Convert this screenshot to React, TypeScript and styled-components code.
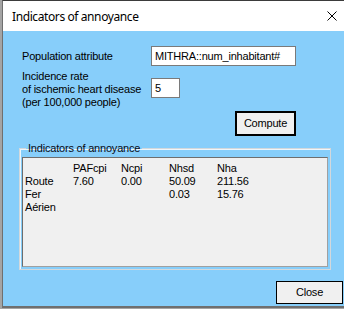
import React from "react";
import styled, { createGlobalStyle } from "styled-components";

const GlobalStyle = createGlobalStyle`
  html, body {
    margin: 0;
    padding: 0;
    background: #a4a4a4;
    overflow: hidden;
  }
  body {
    width: 344px;
    height: 309px;
  }
`;

const UI_FONT = `"Liberation Sans", Arial, sans-serif`;

const Window = styled.div`
  box-sizing: border-box;
  margin-left: 2px;
  width: 342px;
  height: 308px;
  border-top: 1px solid #3b3b3b;
  border-left: 1px solid #6f6f6f;
  border-bottom: 2px solid #6f6f6f;
  display: flex;
  flex-direction: column;
  background: #87cefa;
`;

const TitleBar = styled.div`
  height: 30px;
  flex: none;
  background: #ffffff;
  display: flex;
  align-items: center;
  padding-left: 9px;
  font-family: "Noto Sans", "Open Sans", sans-serif;
  font-size: 12px;
  letter-spacing: -0.4px;
  color: #000;
`;

const TitleText = styled.span`
  flex: 1;
`;

const CloseGlyph = styled.svg`
  width: 10px;
  height: 10px;
  margin-right: 7px;
  flex: none;
`;

const Client = styled.div`
  flex: 1;
  display: flex;
  flex-direction: column;
  padding: 15px 1px 0 16px;
  font-family: ${UI_FONT};
  font-size: 11px;
  letter-spacing: -0.2px;
  color: #000;
`;

const TopSection = styled.div`
  width: 277px;
  display: flex;
  flex-direction: column;
`;

const Form = styled.div`
  display: grid;
  grid-template-columns: 129px 145px;
  row-gap: 4px;
  padding-left: 3px;
  line-height: 13px;
`;

const Label = styled.div<{ $center?: boolean }>`
  align-self: ${(p) => (p.$center ? "center" : "start")};
`;

const Field = styled.div<{ $width: number; $offset?: number }>`
  box-sizing: border-box;
  width: ${(p) => p.$width}px;
  height: 20px;
  margin-top: ${(p) => p.$offset ?? 0}px;
  align-self: start;
  background: #fff;
  border: 1px solid #7a7a7a;
  display: flex;
  align-items: center;
  padding-left: 3px;
  white-space: nowrap;
  overflow: hidden;
`;

const Button = styled.div<{ $default?: boolean; $w: number; $h: number }>`
  box-sizing: border-box;
  width: ${(p) => p.$w}px;
  height: ${(p) => p.$h}px;
  background: #f0f0f0;
  border: ${(p) => (p.$default ? 2 : 1)}px solid #000;
  display: flex;
  align-items: center;
  justify-content: center;
  line-height: 13px;
`;

const ComputeButton = styled(Button)`
  align-self: flex-end;
  margin-top: 2px;
`;

const CloseButton = styled(Button)`
  align-self: flex-end;
  margin-top: 11px;
`;

const Group = styled.fieldset`
  box-sizing: border-box;
  width: 312px;
  margin: 6px 0 0 0;
  padding: 2px 2px 2px 2px;
  border: 1px solid #d2d8dc;
  box-shadow: inset 1px 1px 0 #eef6fb;
  min-width: 0;
`;

const GroupTitle = styled.legend`
  margin-left: 4px;
  padding: 0 2px;
  line-height: 13px;
  color: #0a0a14;
`;

const Results = styled.div`
  box-sizing: border-box;
  height: 110px;
  background: #f0f0f0;
  border: 1px solid #6e6e6e;
  border-right-color: #a0a0a0;
  border-bottom-color: #a0a0a0;
  padding: 4px 0 0 2px;
  display: grid;
  grid-template-columns: repeat(5, 48px);
  grid-auto-rows: 13px;
  line-height: 13px;
  align-content: start;
`;

const Cell = styled.span`
  white-space: nowrap;
`;

const rows: string[][] = [
  ["", "PAFcpi", "Ncpi", "Nhsd", "Nha"],
  ["Route", "7.60", "0.00", "50.09", "211.56"],
  ["Fer", "", "", "0.03", "15.76"],
  ["Aérien", "", "", "", ""],
];

export default function App() {
  return (
    <>
      <GlobalStyle />
      <Window>
        <TitleBar>
          <TitleText>Indicators of annoyance</TitleText>
          <CloseGlyph viewBox="0 0 10 10">
            <path d="M0.5 0.5 L9.5 9.5 M9.5 0.5 L0.5 9.5" stroke="#000" strokeWidth="1" fill="none" />
          </CloseGlyph>
        </TitleBar>
        <Client>
          <TopSection>
            <Form>
              <Label $center>Population attribute</Label>
              <Field $width={145}>MITHRA::num_inhabitant#</Field>
              <Label>
                Incidence rate
                <br />
                of ischemic heart disease
                <br />
                (per 100,000 people)
              </Label>
              <Field $width={29} $offset={8}>
                5
              </Field>
            </Form>
            <ComputeButton $default $w={61} $h={25}>
              Compute
            </ComputeButton>
          </TopSection>
          <Group>
            <GroupTitle>Indicators of annoyance</GroupTitle>
            <Results>
              {rows.map((r, i) =>
                r.map((c, j) => <Cell key={`${i}-${j}`}>{c}</Cell>)
              )}
            </Results>
          </Group>
          <CloseButton $w={67} $h={23}>
            Close
          </CloseButton>
        </Client>
      </Window>
    </>
  );
}
